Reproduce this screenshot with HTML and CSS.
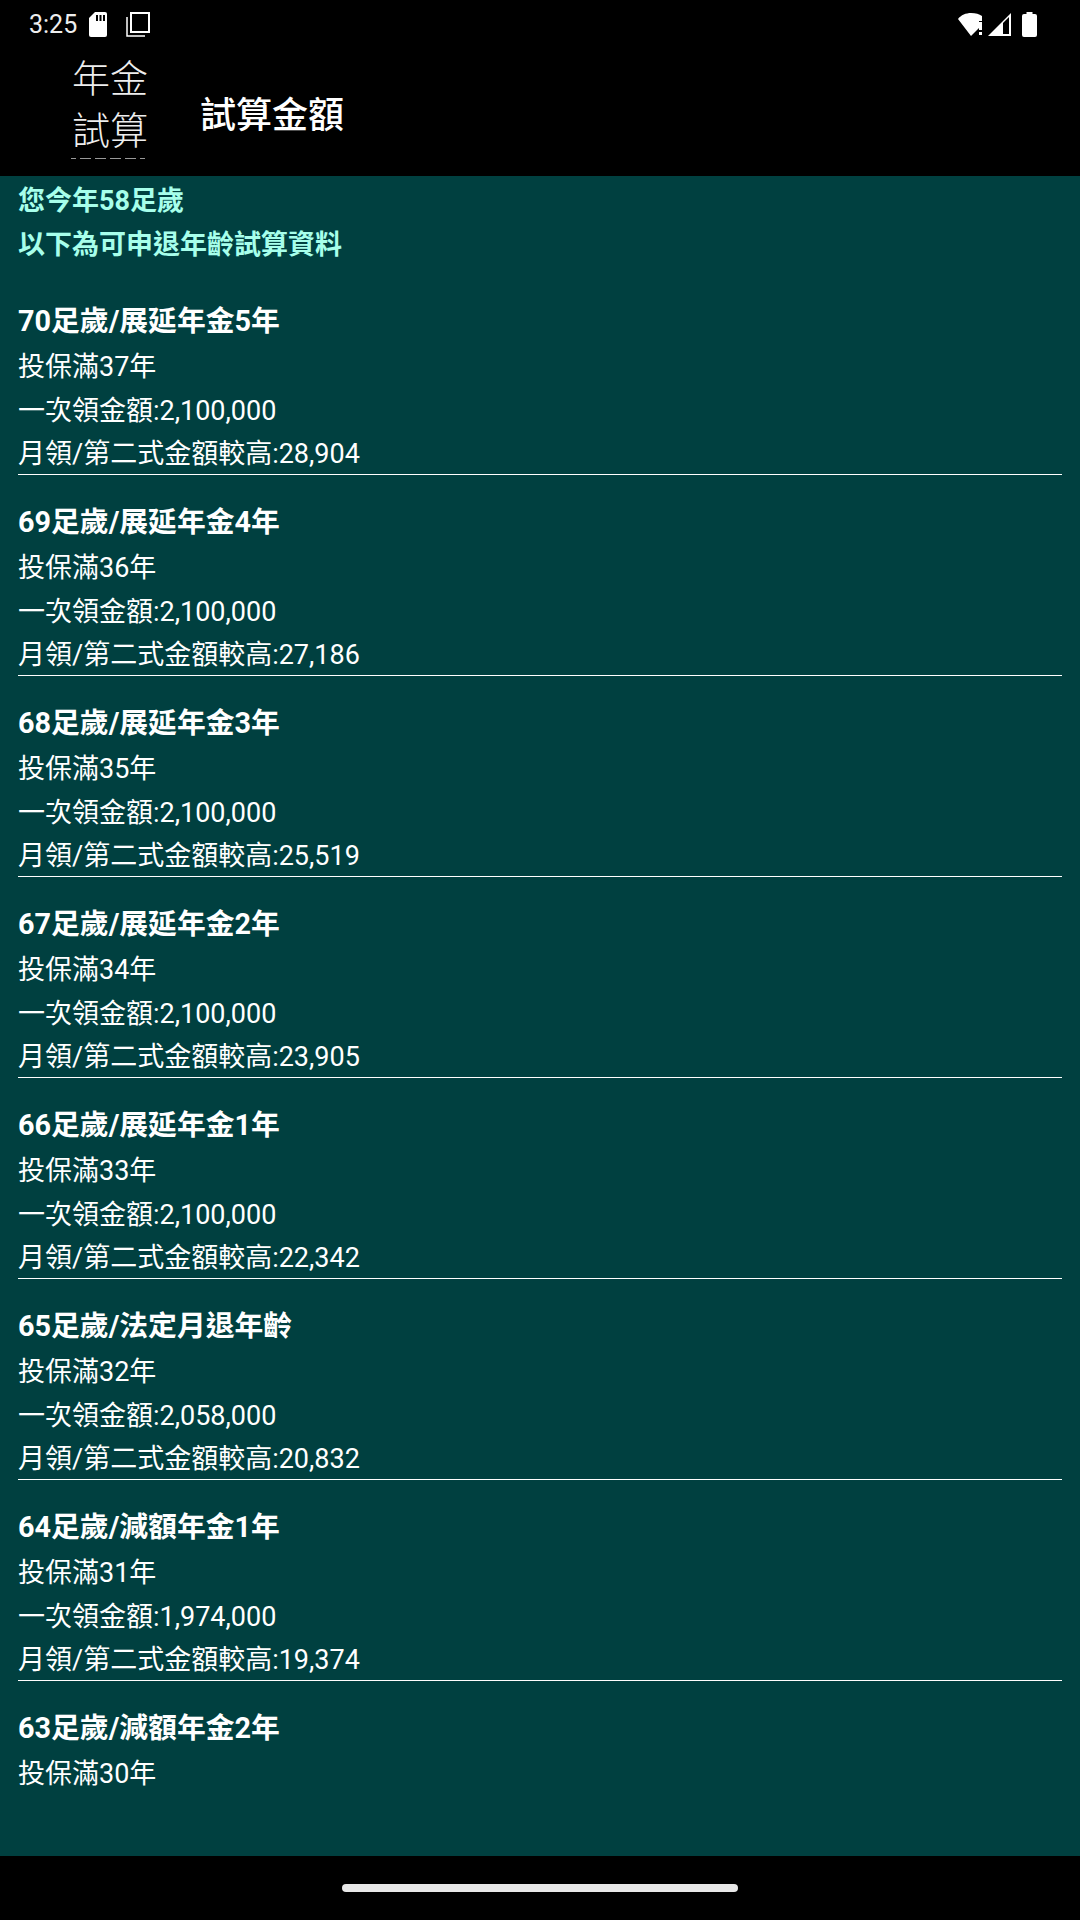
FILE: index.html
```html
<!DOCTYPE html>
<html lang="zh-Hant">
<head>
    <meta charset="UTF-8">
    <meta name="viewport" content="width=device-width, initial-scale=1.0">
    <title>試算金額</title>
    <link rel="stylesheet" href="styles.css">
</head>
<body>

    <div class="status-bar">
        <div class="status-left">
            <span class="clock">3:25</span>
            <svg class="sd-icon" width="18" height="25" viewBox="0 0 18 25">
                <path fill="#fff" d="M6 0h10a2 2 0 0 1 2 2v21a2 2 0 0 1-2 2H2a2 2 0 0 1-2-2V6z"/>
                <path fill="#000" d="M7 3h2v6H7zM10.500 3h2v6h-2zM14 3h2v6h-2z"/>
            </svg>
            <svg class="copy-icon" width="24" height="25" viewBox="0 0 24 25">
                <path fill="none" stroke="#fff" stroke-width="2" d="M5 1h18v19H5z"/>
                <path fill="none" stroke="#fff" stroke-width="1.500" d="M1 5v19h18"/>
            </svg>
        </div>
        <div class="status-right">
            <svg class="wifi-icon" width="27" height="24" viewBox="0 0 27 24">
                <path fill="#fff" d="M0 7C3 3 8 1 13 1s8 1 11 3v5h-3v7l-8 8z"/>
                <path fill="#fff" d="M21 10h3v8h-3zM21 20h3v3h-3z"/>
            </svg>
            <svg class="signal-icon" width="24" height="24" viewBox="0 0 24 24">
                <path fill="#fff" d="M0 24 23 1v23z"/>
                <path fill="#000" d="M15 11l6-6v17h-6z"/>
            </svg>
            <svg class="battery-icon" width="15" height="25" viewBox="0 0 15 25">
                <path fill="#fff" d="M4.500 0h6v2H13a2 2 0 0 1 2 2v19a2 2 0 0 1-2 2H2a2 2 0 0 1-2-2V4a2 2 0 0 1 2-2h2.500z"/>
            </svg>
        </div>
    </div>

    <div class="toolbar">
        <div class="logo">
            <div class="logo-line">年金</div>
            <div class="logo-line">試算</div>
            <div class="logo-fine">
                <i class="short"></i><i></i><i></i><i></i><i></i><i class="short"></i>
            </div>
        </div>
        <div class="toolbar-title">試算金額</div>
    </div>

    <div class="content">
        <div class="intro">
            <div>您今年58足歲</div>
            <div>以下為可申退年齡試算資料</div>
        </div>

        <div class="plan">
            <div class="plan-title">70足歲/展延年金5年</div>
            <div>投保滿37年</div>
            <div>一次領金額:2,100,000</div>
            <div class="plan-end">月領/第二式金額較高:28,904</div>
        </div>
        <div class="plan">
            <div class="plan-title">69足歲/展延年金4年</div>
            <div>投保滿36年</div>
            <div>一次領金額:2,100,000</div>
            <div class="plan-end">月領/第二式金額較高:27,186</div>
        </div>
        <div class="plan">
            <div class="plan-title">68足歲/展延年金3年</div>
            <div>投保滿35年</div>
            <div>一次領金額:2,100,000</div>
            <div class="plan-end">月領/第二式金額較高:25,519</div>
        </div>
        <div class="plan">
            <div class="plan-title">67足歲/展延年金2年</div>
            <div>投保滿34年</div>
            <div>一次領金額:2,100,000</div>
            <div class="plan-end">月領/第二式金額較高:23,905</div>
        </div>
        <div class="plan">
            <div class="plan-title">66足歲/展延年金1年</div>
            <div>投保滿33年</div>
            <div>一次領金額:2,100,000</div>
            <div class="plan-end">月領/第二式金額較高:22,342</div>
        </div>
        <div class="plan">
            <div class="plan-title">65足歲/法定月退年齡</div>
            <div>投保滿32年</div>
            <div>一次領金額:2,058,000</div>
            <div class="plan-end">月領/第二式金額較高:20,832</div>
        </div>
        <div class="plan">
            <div class="plan-title">64足歲/減額年金1年</div>
            <div>投保滿31年</div>
            <div>一次領金額:1,974,000</div>
            <div class="plan-end">月領/第二式金額較高:19,374</div>
        </div>
        <div class="plan plan-last">
            <div class="plan-title">63足歲/減額年金2年</div>
            <div>投保滿30年</div>
        </div>
    </div>

    <div class="nav-bar">
        <div class="home-pill"></div>
    </div>

</body>
</html>
```

FILE: styles.css
```css
html, body {
    margin: 0;
    height: 100%;
}

body {
    font-family: Roboto, "Noto Sans CJK TC", sans-serif;
    background-color: #000;
    color: #fff;
    display: flex;
    flex-direction: column;
    height: 1920px;
    overflow: hidden;
}

.status-bar {
    height: 48px;
    flex: none;
    display: flex;
    justify-content: space-between;
    align-items: center;
    padding: 0 43px 0 29px;
}

.status-left,
.status-right {
    display: flex;
    align-items: center;
}

.clock {
    font-size: 25px;
    color: #eee;
    margin-right: 12px;
}

.copy-icon {
    margin-left: 19px;
}

.signal-icon {
    margin-left: 3px;
}

.battery-icon {
    margin-left: 10px;
}

.toolbar {
    height: 128px;
    flex: none;
    display: flex;
    align-items: flex-start;
}

.logo {
    width: 96px;
    margin-left: 62px;
    padding-top: 5px;
    display: flex;
    flex-direction: column;
    align-items: center;
}

.logo-line {
    font-size: 38px;
    line-height: 52px;
    font-weight: 300;
    color: #eee;
}

.logo-fine {
    display: flex;
    gap: 4px;
    margin: 1px 0 0 -4px;
}

.logo-fine i {
    width: 11px;
    height: 1px;
    background-color: #999;
}

.logo-fine i.short {
    width: 5px;
}

.toolbar-title {
    margin-left: 42px;
    font-size: 36px;
    line-height: 136px;
    font-weight: 500;
}

.content {
    flex: 1;
    background-color: #004040;
    padding: 3px 18px 0;
    font-size: 27px;
    line-height: 44px;
}

.intro {
    color: #a7ffeb;
    font-weight: 700;
    margin-bottom: 32px;
}

.plan {
    border-bottom: 1px solid #fff;
    margin-bottom: 25px;
}

.plan-last {
    border-bottom: none;
}

.plan-title {
    font-size: 28.800px;
    font-weight: 700;
    margin-bottom: 2px;
}

.plan-end {
    padding-top: 1px;
    line-height: 40px;
}

.nav-bar {
    height: 64px;
    flex: none;
    display: flex;
    justify-content: center;
    padding-top: 28px;
    box-sizing: border-box;
}

.home-pill {
    width: 396px;
    height: 8px;
    border-radius: 4px;
    background-color: #e8e8e8;
}
```
